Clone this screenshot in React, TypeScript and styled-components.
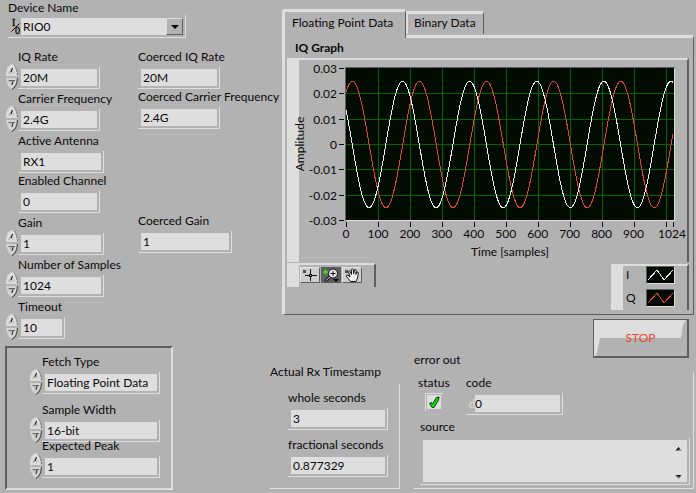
import React, { ReactNode, useId, useState } from "react";
import styled, { createGlobalStyle, css } from "styled-components";

const c = {
  face: "#b2b2b2",
  light: "#dedede",
  dark: "#5e5e5e",
  ink: "#0a0a0a",
  plot: "#020b02",
  grid: "#006400",
  white: "#f0f0f0",
  red: "#e8452f",
};

const GlobalStyle = createGlobalStyle`
  *, *::before, *::after { box-sizing: border-box; }
  body { margin: 0; background: ${c.face}; }
  body, button, input, select, textarea {
    font-family: Lato, "Open Sans", sans-serif;
    font-size: 12px;
    line-height: 16px;
    color: ${c.ink};
  }
  button, input, select, textarea { border: 0; padding: 0; margin: 0; border-radius: 0; }
`;

const Page = styled.main`
  display: flex;
  align-items: stretch;
  min-height: 100vh;
  background: ${c.face};
`;

const Settings = styled.section`
  flex: 0 0 270px;
  display: flex;
  flex-direction: column;
`;

const Results = styled.section`
  flex: 1;
  min-width: 0;
  display: flex;
  flex-direction: column;
  padding: 9px 2px 0 0;
`;

const Label = styled.label`
  display: block;
  height: 16px;
  white-space: nowrap;
`;

const Heading = styled.h2`
  margin: 0;
  height: 16px;
  font-size: inherit;
  font-weight: 400;
  white-space: nowrap;
`;

const Well = styled.div<{ $width?: number }>`
  display: flex;
  width: ${(p) => (p.$width ? `${p.$width}px` : "100%")};
  height: 22px;
  padding: 2px 2px 2px 3px;
  border: solid ${c.light};
  border-width: 0 1px 1px 0;
`;

const TextInput = styled.input`
  flex: 1;
  min-width: 0;
  height: 17px;
  padding: 0 2px;
  line-height: 17px;
  background: ${c.light};
  outline: none;
`;

const FieldGrid = styled.div<{ $spin: boolean; $pull?: boolean }>`
  display: grid;
  grid-template-columns: ${(p) => (p.$spin ? "12px auto" : "auto")};
  justify-content: start;
  row-gap: 2px;
  margin-top: ${(p) => (p.$pull ? "-4px" : "0")};

  > ${Label} {
    grid-column: -2;
    width: 0;
  }
  > ${Well} {
    grid-column: -2;
  }
`;

const Spinner = styled.span`
  grid-column: 1;
  grid-row: 2;
  display: flex;
  flex-direction: column;
  height: 26px;
  margin: -3px 0 -1px;
`;

const SpinButton = styled.button`
  display: block;
  width: 12px;
  height: 13px;
  background: none;

  svg {
    display: block;
  }
`;

function SpinControl({ name }: { name: string }) {
  return (
    <Spinner>
      <SpinButton type="button" aria-label={`Increase ${name}`}>
        <svg width="12" height="13" viewBox="0 0 12 13">
          <path d="M0 12V9Q1 1 6 0Q10 1 12 12Z" fill="#dcdcdc" />
          <path d="M8 1Q11 4 11.500 12" fill="none" stroke="#6a6a6a" strokeDasharray="2 1" />
          <path d="M2.500 9.500L6 4.500L9 9.500Z" fill="#c6c6c6" />
          <path d="M3 9.500L6.200 4.500" stroke="#9a9a9a" />
          <path d="M6.500 4L5 8" stroke="#111" />
        </svg>
      </SpinButton>
      <SpinButton type="button" aria-label={`Decrease ${name}`}>
        <svg width="12" height="13" viewBox="0 0 12 13">
          <path d="M0 1H12Q11 11 7 13Q1 10 0 1Z" fill="#d4d4d4" />
          <path d="M11.500 1Q11 10 6 12.500" fill="none" stroke="#4a4a4a" strokeWidth="1.200" />
          <path d="M2.500 3.500H9L6 8.500Z" fill="#bababa" />
          <path d="M2.500 3.500H9" stroke="#666" />
          <path d="M7 4L6 8" stroke="#333" />
        </svg>
      </SpinButton>
    </Spinner>
  );
}

interface FieldProps {
  label: string;
  value: string;
  width: number;
  spin?: boolean;
  readOnly?: boolean;
  pull?: boolean;
}

function Field({ label, value, width, spin = false, readOnly = false, pull }: FieldProps) {
  const id = useId();
  return (
    <FieldGrid $spin={spin} $pull={pull}>
      <Label htmlFor={id}>{label}</Label>
      {spin && <SpinControl name={label} />}
      <Well $width={width}>
        <TextInput id={id} defaultValue={value} readOnly={readOnly} />
      </Well>
    </FieldGrid>
  );
}

const Device = styled.div`
  width: 178px;
  margin-left: 8px;
`;

const DeviceLabel = styled(Label)`
  height: 15px;
`;

const DeviceWell = styled.div`
  display: grid;
  grid-template-columns: 13px 1fr 17px;
  height: 23px;
  padding: 3px 2px 2px 0;
  border: solid ${c.light};
  border-width: 0 1px 1px 0;
`;

const IoMark = styled.svg`
  width: 13px;
  height: 17px;
`;

const DeviceSelect = styled.select`
  grid-column: 2 / 4;
  grid-row: 1;
  height: 17px;
  padding: 0 20px 0 2px;
  appearance: none;
  background: ${c.light};
  outline: none;
`;

const DropArrow = styled.span`
  grid-column: 3;
  grid-row: 1;
  display: flex;
  align-items: center;
  justify-content: center;
  border: 1px solid ${c.light};
  border-right-color: ${c.dark};
  border-bottom-color: ${c.dark};
  background: ${c.face};
  pointer-events: none;
`;

const Columns = styled.div`
  display: flex;
  margin-top: 11px;
`;

const FieldColumn = styled.div`
  flex: 0 0 132px;
  display: flex;
  flex-direction: column;
  gap: 2px;
  padding-left: 6px;
`;

const Indented = styled.div`
  padding-left: 12px;
`;

const CoercedColumn = styled.div`
  display: flex;
  flex-direction: column;
  padding-left: 6px;
`;

const GainSlot = styled.div`
  margin-top: 84px;
`;

const FetchGroup = styled.fieldset`
  display: flex;
  flex-direction: column;
  width: 168px;
  min-width: 0;
  margin: 7px 0 0 5px;
  padding: 6px 10px 10px 23px;
  border: 2px solid ${c.light};
  border-left-color: ${c.dark};
  border-top-color: ${c.dark};

  > :nth-child(2) {
    margin-top: 8px;
  }
`;

const TabControl = styled.div`
  margin-left: 12px;
`;

const TabBar = styled.div`
  display: flex;
  align-items: flex-start;
  height: 26px;
`;

const Tab = styled.button<{ $active: boolean }>`
  border: solid ${c.light};
  background: ${c.face};
  text-align: left;
  white-space: nowrap;
  ${(p) =>
    p.$active
      ? css`
          position: relative;
          z-index: 1;
          width: 124px;
          height: 29px;
          padding: 0 0 5px 7px;
          border-width: 3px 1px 0 3px;
          border-top-left-radius: 3px;
        `
      : css`
          width: 78px;
          height: 23px;
          margin-top: 2px;
          padding: 0 0 2px 6px;
          border-width: 3px 1px 0 2px;
        `}
  border-right-color: ${c.dark};
`;

const Panel = styled.div`
  padding: 2px 4px 4px 2px;
  border: solid ${c.light};
  border-width: 3px 1px 1px 3px;
  border-right-color: ${c.dark};
  border-bottom-color: ${c.dark};
`;

const GraphTitle = styled.h1`
  margin: 0 0 2px 8px;
  font-size: 12px;
  line-height: 16px;
  font-weight: 700;
`;

const Plate = styled.div`
  border: solid ${c.light};
  border-width: 2px 2px 0 12px;
  border-right-color: ${c.dark};
`;

const ChartSvg = styled.svg`
  display: block;
  width: 100%;
  height: auto;
  overflow: visible;

  text {
    font-size: 12px;
    fill: ${c.ink};
  }
`;

const GraphFooter = styled.div`
  display: flex;
  justify-content: space-between;
  align-items: flex-start;
  margin-top: 1px;
`;

const Palette = styled(Plate)`
  display: flex;
  gap: 1px;
  width: 89px;
  height: 24px;
  padding: 2px 0 0 1px;
`;

const ToolButton = styled.button<{ $active?: boolean }>`
  width: 20px;
  height: 16px;
  border: 1px solid ${(p) => (p.$active ? c.dark : "#e6e6e6")};
  border-right-color: ${c.dark};
  border-bottom-color: ${c.dark};
  background: ${(p) => (p.$active ? c.dark : "#cdcdcd")};

  svg {
    display: block;
  }
`;

const Legend = styled(Plate)`
  width: 78px;
  height: 46px;
  margin-top: 1px;
  padding: 0 12px 0 3px;
`;

const LegendRow = styled.div`
  display: flex;
  align-items: center;
  justify-content: space-between;
  height: 18px;
  margin-bottom: 5px;
`;

const Swatch = styled.svg`
  width: 29px;
  height: 18px;
  border: 1px solid ${c.dark};
  border-right-color: ${c.light};
  border-bottom-color: ${c.light};
  background: ${c.plot};
`;

const StopButton = styled.button`
  position: relative;
  align-self: flex-end;
  width: 96px;
  height: 39px;
  margin: 4px 5px -6px 0;
  border: solid ${c.dark};
  border-width: 1px 2px 2px 1px;
  background: linear-gradient(${c.light} 50%, ${c.face} 50%);
  color: ${c.red};

  &::before,
  &::after {
    content: "";
    position: absolute;
    width: 6px;
    height: 18px;
  }
  &::before {
    left: 0;
    bottom: 0;
    background: ${c.light};
    clip-path: polygon(0 0, 100% 0, 60% 70%, 30% 100%, 0 100%);
  }
  &::after {
    right: 0;
    top: 0;
    background: ${c.face};
    clip-path: polygon(80% 0, 100% 0, 100% 100%, 0 100%, 30% 30%);
  }
`;

const Status = styled.div`
  display: flex;
  align-items: flex-start;
`;

const Timestamp = styled.section`
  flex: 0 0 130px;
  padding-top: 12px;
`;

const Etched = styled.div`
  border: solid ${c.light};
  border-width: 0 1px 1px 0;
`;

const TimestampGroup = styled(Etched)`
  display: flex;
  flex-direction: column;
  gap: 7px;
  height: 105px;
  margin-top: 4px;
  padding: 6px 11px 0 18px;
`;

const ErrorOut = styled.section`
  flex: 1;
  min-width: 0;
  margin-left: 14px;
`;

const ErrorGroup = styled(Etched)`
  height: 118px;
  margin-top: 3px;
  padding: 4px 3px 3px 6px;
`;

const ErrorTop = styled.div`
  display: flex;
  gap: 18px;
  height: 44px;
`;

const StatusCell = styled.div`
  width: 30px;
  margin-left: -2px;
`;

const StatusBox = styled.span`
  display: grid;
  width: 18px;
  height: 18px;
  margin: 2px 0 0 7px;
  padding: 1px;
  border: solid ${c.light};
  border-width: 1px 0 0 1px;

  > * {
    grid-area: 1 / 1;
  }
  input {
    appearance: none;
    width: 14px;
    height: 14px;
    margin: 0;
    background: ${c.light};
  }
  svg {
    pointer-events: none;
  }
`;

const CodeWell = styled.div`
  display: flex;
  width: 97px;
  height: 22px;
  margin-top: 2px;
  padding: 2px 2px 2px 3px;
  border: solid ${c.light};
  border-width: 0 1px 1px 0;
  line-height: 17px;
`;

const Radix = styled.span`
  width: 6px;
  color: ${c.light};
  font-size: 11px;
`;

const CodeInput = styled(TextInput)`
  padding: 0;
`;

const SourceWell = styled.div`
  display: flex;
  height: 47px;
  margin-top: 3px;
  padding: 2px 2px 2px 3px;
  border: solid ${c.light};
  border-width: 0 1px 1px 0;
`;

const SourceText = styled.textarea`
  flex: 1;
  min-width: 0;
  resize: none;
  outline: none;
  background: ${c.light};
`;

const ScrollButtons = styled.span`
  display: flex;
  flex-direction: column;
  justify-content: space-between;
  width: 17px;
  background: ${c.light};
`;

const ScrollButton = styled.button`
  height: 14px;
  padding-top: 3px;
  background: none;

  svg {
    display: block;
    margin-left: 5px;
  }
`;

const X0 = 47;
const X1 = 375;
const ZERO = 84;
const PER_UNIT = 2530;
const PERIOD = 210;
const sampleX = (n: number) => X0 + n * 0.3195;
const ampY = (v: number) => ZERO - v * PER_UNIT;

function wave(peak: number) {
  const points: string[] = [];
  for (let n = 0; n <= 1024; n += 3) {
    const v = 0.025 * Math.cos((2 * Math.PI * (n - peak)) / PERIOD);
    points.push(`${sampleX(n).toFixed(2)},${(ampY(v) + 0.5).toFixed(2)}`);
  }
  return points.join(" ");
}

const yTicks = [0.03, 0.02, 0.01, 0, -0.01, -0.02, -0.03];
const xTicks = [0, 100, 200, 300, 400, 500, 600, 700, 800, 900, 1000, 1024];

function Chart() {
  return (
    <ChartSvg viewBox="0 0 388 202" role="img" aria-label="IQ Graph">
      <g shapeRendering="crispEdges" fill="none">
        <rect x={X0 - 1} y="7" width={X1 - X0 + 2} height="154" fill={c.light} />
        <path d="M46 161V7H376V8H47V161Z" fill={c.dark} />
        <rect x={X0} y="8" width={X1 - X0} height="152" fill={c.plot} />
        {yTicks.map((v) => {
          const y = Math.round(ampY(v)) + 0.5;
          return (
            <g key={v}>
              {Math.abs(v) < 0.03 && <path d={`M${X0} ${y}H${X1}`} stroke={c.grid} />}
              <path d={`M40 ${y}H45`} stroke={c.ink} />
            </g>
          );
        })}
        {xTicks.map((n) => {
          const x = Math.round(sampleX(n)) + 0.5;
          return (
            <g key={n}>
              {n > 0 && n < 1024 && <path d={`M${x} 8V160`} stroke={c.grid} />}
              <path d={`M${x} 162V167`} stroke={c.ink} />
            </g>
          );
        })}
        <polyline points={wave(20)} stroke={c.red} />
        <polyline points={wave(177)} stroke={c.white} />
      </g>
      {yTicks.map((v) => (
        <text key={v} x="38" y={ampY(v) + 5} textAnchor="end">
          {v === 0 ? "0" : v.toFixed(2)}
        </text>
      ))}
      {xTicks
        .filter((n) => n !== 1000)
        .map((n) => (
          <text key={n} x={n === 1024 ? 373 : sampleX(n)} y="178" textAnchor="middle">
            {n}
          </text>
        ))}
      <text x="211" y="196" textAnchor="middle">
        Time [samples]
      </text>
      <text transform="translate(5 84) rotate(-90)" textAnchor="middle">
        Amplitude
      </text>
    </ChartSvg>
  );
}

function LegendItem({ name, color }: { name: string; color: string }) {
  return (
    <LegendRow>
      <span>{name}</span>
      <Swatch viewBox="0 0 27 16">
        <path d="M1 13L10 3L17 13L26 3" fill="none" stroke={color} shapeRendering="crispEdges" />
      </Swatch>
    </LegendRow>
  );
}

const tools: { name: string; icon: ReactNode }[] = [
  {
    name: "Cursor",
    icon: (
      <svg width="18" height="14" viewBox="0 0 18 14" shapeRendering="crispEdges">
        <rect x="2" y="2" width="3" height="3" fill="#4a5a42" />
        <path d="M4 7.500H16M9.500 1V13" stroke="#111" />
        <rect x="8" y="6" width="3" height="3" fill="#111" />
        <rect x="9" y="7" width="1" height="1" fill="#cdcdcd" />
      </svg>
    ),
  },
  {
    name: "Zoom",
    icon: (
      <svg width="18" height="14" viewBox="0 0 18 14">
        <path d="M3.500 1.500V6.500M1 4H6" stroke="#3ee020" strokeWidth="1.600" />
        <path d="M8.500 8.500L3.500 13" stroke="#111" strokeWidth="3" />
        <path d="M8 9L4 12.500" stroke="#ddd" />
        <circle cx="11" cy="5.500" r="4.500" fill="#e8e8e8" stroke="#111" />
        <path d="M8.500 5.500H13.500M11 3V8" stroke="#111" />
        <path d="M11 11H17L14 14Z" fill="#050505" />
      </svg>
    ),
  },
  {
    name: "Pan",
    icon: (
      <svg width="18" height="14" viewBox="0 0 18 14">
        <rect x="2" y="2" width="3" height="3" fill="#4a5a42" />
        <path
          d="M7.500 13.500L3.500 8.500Q3 6.500 5 7.200L7 9L5.500 3.500Q6.200 2 7.200 3.500L8.500 6.500L8.300 1.500Q9.500 0 10.300 1.500L10.600 6L11.500 1.700Q12.800 1 13.200 2.500L12.800 6.500L14 4Q15.500 3.600 15.300 5.500L14.500 10L13 13.500Z"
          fill="#f2f2f2"
          stroke="#111"
        />
      </svg>
    ),
  },
];

export default function App() {
  const [tab, setTab] = useState(0);
  return (
    <>
      <GlobalStyle />
      <Page>
        <Settings>
          <Device>
            <DeviceLabel htmlFor="device">Device Name</DeviceLabel>
            <DeviceWell>
              <IoMark viewBox="0 0 13 17" aria-hidden="true">
                <text x="4" y="8" fontFamily="Liberation Serif" fontSize="10" stroke={c.ink} strokeWidth="0.3">
                  I
                </text>
                <path d="M3.500 13.500L11.500 5.500" stroke={c.ink} />
                <text x="7" y="16" fontFamily="Liberation Serif" fontSize="10" stroke={c.ink} strokeWidth="0.3">
                  0
                </text>
              </IoMark>
              <DeviceSelect id="device" defaultValue="RIO0">
                <option>RIO0</option>
              </DeviceSelect>
              <DropArrow>
                <svg width="8" height="4" viewBox="0 0 8 4">
                  <path d="M0 0H8L4 4Z" fill={c.ink} />
                </svg>
              </DropArrow>
            </DeviceWell>
          </Device>

          <Columns>
            <FieldColumn>
              <Field label="IQ Rate" value="20M" width={82} spin />
              <Field label="Carrier Frequency" value="2.4G" width={82} spin />
              <Indented>
                <Field label="Active Antenna" value="RX1" width={86} />
                <Field label="Enabled Channel" value="0" width={82} />
              </Indented>
              <Field label="Gain" value="1" width={86} spin />
              <Field label="Number of Samples" value="1024" width={86} spin />
              <Field label="Timeout" value="10" width={47} spin />
            </FieldColumn>
            <CoercedColumn>
              <Field label="Coerced IQ Rate" value="20M" width={82} readOnly />
              <Field label="Coerced Carrier Frequency" value="2.4G" width={82} readOnly />
              <GainSlot>
                <Field label="Coerced Gain" value="1" width={94} readOnly />
              </GainSlot>
            </CoercedColumn>
          </Columns>

          <FetchGroup>
            <Field label="Fetch Type" value="Floating Point Data" width={118} spin />
            <Field label="Sample Width" value="16-bit" width={118} spin />
            <Field label="Expected Peak" value="1" width={118} spin pull />
          </FetchGroup>
        </Settings>

        <Results>
          <TabControl>
            <TabBar role="tablist">
              {["Floating Point Data", "Binary Data"].map((name, i) => (
                <Tab
                  key={name}
                  type="button"
                  role="tab"
                  aria-selected={tab === i}
                  $active={tab === i}
                  onClick={() => setTab(i)}
                >
                  {name}
                </Tab>
              ))}
            </TabBar>
            <Panel role="tabpanel">
              <GraphTitle>IQ Graph</GraphTitle>
              <Plate>
                <Chart />
              </Plate>
              <GraphFooter>
                <Palette>
                  {tools.map((t) => (
                    <ToolButton key={t.name} type="button" aria-label={t.name} $active={t.name === "Zoom"}>
                      {t.icon}
                    </ToolButton>
                  ))}
                </Palette>
                <Legend>
                  <LegendItem name="I" color={c.white} />
                  <LegendItem name="Q" color={c.red} />
                </Legend>
              </GraphFooter>
            </Panel>
          </TabControl>

          <StopButton type="button">STOP</StopButton>

          <Status>
            <Timestamp>
              <Heading>Actual Rx Timestamp</Heading>
              <TimestampGroup>
                <Field label="whole seconds" value="3" width={100} readOnly />
                <Field label="fractional seconds" value="0.877329" width={100} readOnly />
              </TimestampGroup>
            </Timestamp>
            <ErrorOut>
              <Heading>error out</Heading>
              <ErrorGroup>
                <ErrorTop>
                  <StatusCell>
                    <Label htmlFor="status">status</Label>
                    <StatusBox>
                      <input id="status" type="checkbox" defaultChecked />
                      <svg width="14" height="14" viewBox="0 0 14 14">
                        <path
                          d="M2.500 8.500L4.500 7.500L5.500 9L9.500 2.500L12 2L11.500 5L7 12.500L5 12.500Z"
                          fill="#00e800"
                          stroke="#0a2a0a"
                        />
                      </svg>
                    </StatusBox>
                  </StatusCell>
                  <div>
                    <Label htmlFor="code">code</Label>
                    <CodeWell>
                      <Radix>d</Radix>
                      <CodeInput id="code" defaultValue="0" readOnly />
                    </CodeWell>
                  </div>
                </ErrorTop>
                <Label htmlFor="source">source</Label>
                <SourceWell>
                  <SourceText id="source" readOnly />
                  <ScrollButtons>
                    <ScrollButton type="button" aria-label="Scroll up">
                      <svg width="7" height="4" viewBox="0 0 7 4">
                        <path d="M0 4L3.500 0L7 4Z" fill="#8a8a8a" />
                        <path d="M1 3.500L3.500 0L5 2Z" fill={c.ink} />
                      </svg>
                    </ScrollButton>
                    <ScrollButton type="button" aria-label="Scroll down">
                      <svg width="7" height="4" viewBox="0 0 7 4">
                        <path d="M0 0H7L3.500 4Z" fill="#777" />
                        <path d="M1 0H6L4 2Z" fill={c.ink} />
                      </svg>
                    </ScrollButton>
                  </ScrollButtons>
                </SourceWell>
              </ErrorGroup>
            </ErrorOut>
          </Status>
        </Results>
      </Page>
    </>
  );
}
